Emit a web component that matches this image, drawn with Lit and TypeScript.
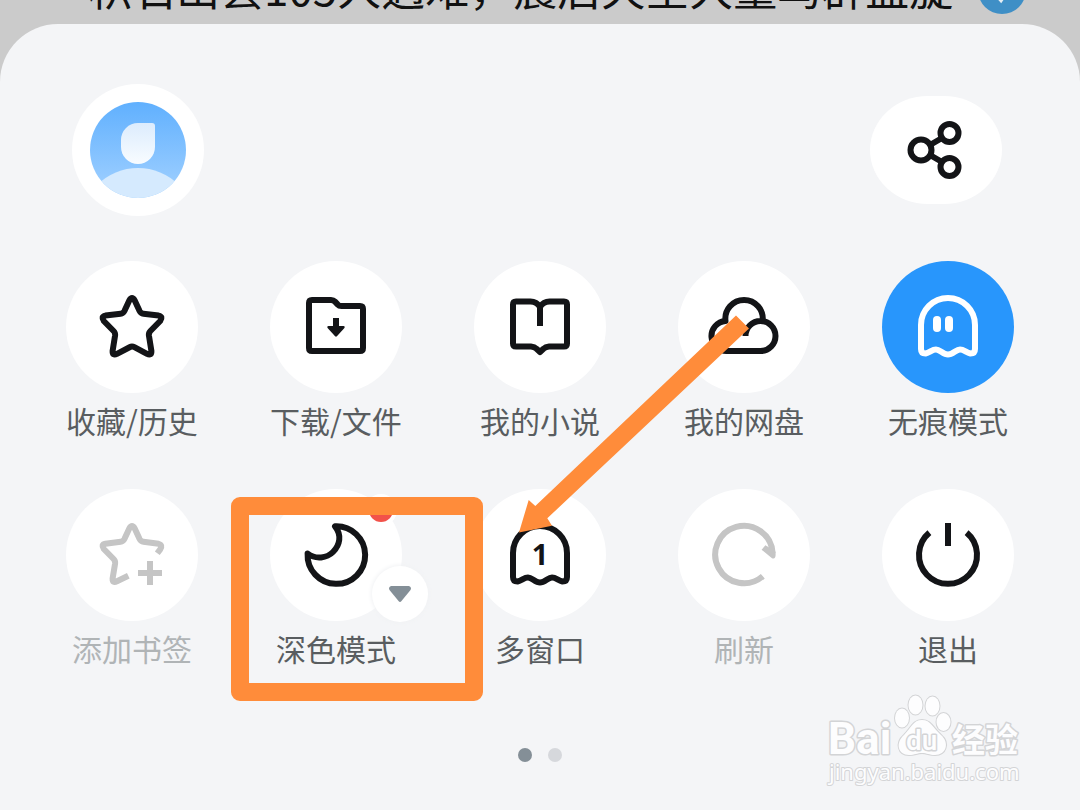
import { LitElement, html, css, svg, nothing } from "lit";
import { customElement, property } from "lit/decorators.js";

const STAR =
  "M63.4 39.2 Q66 34.8 68.6 39.2 L73.6 50 Q74.8 52.4 77.4 52.7 L92.6 54.6 Q97.4 55.6 94.2 60 L84.4 70 Q82.6 71.8 82.9 74.4 L85.4 90 Q85.6 95 81 92.8 L68.4 86.2 Q66 85 63.6 86.2 L51 92.8 Q46.4 95 46.6 90 L49.1 74.4 Q49.4 71.8 47.6 70 L37.8 60 Q34.6 55.6 39.4 54.6 L54.6 52.7 Q57.2 52.4 58.4 50 Z";
const GHOST =
  "M39 64 A27 27 0 0 1 93 64 V88 Q93 92.500 88.500 92.500 C84 91.500 82 88.500 78 88.500 C74 88.500 71 93.500 66 93.500 C61 93.500 58 88.500 54 88.500 C50 88.500 48 91.500 43.500 92.500 Q39 92.500 39 88 Z";

const icons: Record<string, unknown> = {
  star: svg`<path d=${STAR} />`,
  folder: svg`
    <path d="M42 39 H61 Q63.500 39 65 40.600 L67.600 43.400 Q69 45 71.500 45 H90 Q93 45 93 48 V87 Q93 90 90 90 H42 Q39 90 39 87 V42 Q39 39 42 39 Z" />
    <path class="solid" d="M63 57 H69 V65 H73.500 Q75.500 65.400 74.200 67.200 L66.900 75.300 Q66 76.200 65.100 75.300 L57.800 67.200 Q56.500 65.400 58.500 65 H63 Z" />`,
  book: svg`
    <path d="M66 65 V46 C63.500 42 60.500 40.500 56.500 40.500 H42 Q39 40.500 39 43.500 V82.500 Q39 85.500 42 85.500 H57 Q60.500 85.700 62.500 87.800 L66 91 L69.500 87.800 Q71.500 85.700 75 85.500 H90 Q93 85.500 93 82.500 V43.500 Q93 40.500 90 40.500 H75.500 C71.500 40.500 68.500 42 66 46" />`,
  cloud: svg`
    <path d="M67.500 75 A15 15 0 1 1 82.500 90 H49.500 A15 15 0 0 1 47.500 60 A18.700 18.700 0 1 1 84.600 60" />`,
  ghost: svg`
    <path d=${GHOST} />
    <rect class="solid" x="51" y="55" width="8" height="16" rx="4" />
    <rect class="solid" x="63" y="55" width="8" height="16" rx="4" />`,
  starAdd: svg`
    <path d="M91.300 64.300 L94.200 60.400 Q97 56 92.600 54.800 L77.400 52.700 Q74.800 52.400 73.600 50 L68.600 39.200 Q66 34.800 63.400 39.200 L58.400 50 Q57.200 52.400 54.600 52.700 L39.400 54.800 Q34.600 55.600 37.800 60 L47.600 70 Q49.400 71.800 49.100 74.400 L46.600 89.500 Q46.400 94.500 51 92.300 L62.300 86.800" />
    <path d="M84 72 V96 M72 84 H96" />`,
  moon: svg`
    <path d="M65 37.300 A28.800 28.800 0 1 1 37.600 64.500 C46 71 57 69 63 63 C70 56 72 46 65 37.300 Z" />`,
  windows: svg`
    <path d=${GHOST} />
    <text class="count" x="66" y="76" text-anchor="middle">1</text>`,
  refresh: svg`
    <path d="M84.800 87.200 A28.700 28.700 0 1 1 94.600 64" />
    <path class="solid" d="M91 54 L97.600 63 V66 Q97.500 70.500 94 69.200 L83.600 60.800 L87.400 56.200 L92 59 Z" />`,
  power: svg`
    <path d="M47.400 43.600 A29 29 0 1 0 84.600 43.600" />
    <path d="M66 34 V57" />`,
};

@customElement("menu-item")
class MenuItem extends LitElement {
  @property() icon = "";
  @property() label = "";
  @property({ type: Boolean, reflect: true }) active = false;
  @property({ type: Boolean, reflect: true }) disabled = false;

  static styles = css`
    :host {
      position: relative;
      display: flex;
      justify-content: center;
    }
    .item {
      display: flex;
      flex-direction: column;
      align-items: center;
      padding: 0;
      border: 0;
      background: none;
      font: inherit;
      color: #595d60;
    }
    .disc {
      width: 132px;
      height: 132px;
      border-radius: 50%;
      background: #fff;
      color: #131417;
    }
    .disc svg {
      display: block;
      fill: none;
      stroke: currentColor;
      stroke-width: 6;
      stroke-linejoin: round;
    }
    .disc .solid {
      fill: currentColor;
      stroke: none;
    }
    .disc .count {
      fill: currentColor;
      stroke: none;
      font: 700 29px "Noto Sans", sans-serif;
    }
    .label {
      font-size: 30px;
      font-weight: 400;
      line-height: 54px;
      white-space: nowrap;
    }
    :host([active]) .disc {
      background: #2896fc;
      color: #fff;
    }
    :host([disabled]) .disc {
      color: #c5c5c5;
    }
    :host([disabled]) .item {
      color: #b0b4b6;
    }
  `;

  render() {
    return html`
      <button class="item" ?disabled=${this.disabled}>
        <span class="disc">
          <svg width="132" height="132" viewBox="0 0 132 132" aria-hidden="true">${icons[this.icon] ?? nothing}</svg>
        </span>
        <span class="label">${this.label}</span>
      </button>
      <slot></slot>
    `;
  }
}

interface Entry {
  icon: string;
  label: string;
  active?: boolean;
  disabled?: boolean;
}

const entries: Entry[] = [
  { icon: "star", label: "收藏/历史" },
  { icon: "folder", label: "下载/文件" },
  { icon: "book", label: "我的小说" },
  { icon: "cloud", label: "我的网盘" },
  { icon: "ghost", label: "无痕模式", active: true },
  { icon: "starAdd", label: "添加书签", disabled: true },
  { icon: "moon", label: "深色模式" },
  { icon: "windows", label: "多窗口" },
  { icon: "refresh", label: "刷新", disabled: true },
  { icon: "power", label: "退出" },
];

@customElement("app-root")
class AppRoot extends LitElement {
  static styles = css`
    :host {
      display: flex;
      flex-direction: column;
      min-height: 100vh;
      overflow: hidden;
      background: #cbcbcb;
      font-family: "Noto Sans CJK SC", sans-serif;
    }
    .page {
      display: flex;
      align-items: flex-end;
      justify-content: space-between;
      box-sizing: border-box;
      height: 24px;
      padding: 0 54px 10px 88px;
    }
    .headline {
      margin: 0 0 5px;
      font-size: 44px;
      font-weight: 400;
      line-height: 44px;
      white-space: nowrap;
      color: #111;
    }
    .verified {
      flex: none;
      display: block;
    }
    .sheet {
      position: relative;
      flex: 1;
      display: flex;
      flex-direction: column;
      padding-top: 60px;
      border-radius: 58px 58px 0 0;
      background: #f4f5f7;
    }
    .top {
      display: flex;
      align-items: center;
      justify-content: space-between;
      padding: 0 78px 0 72px;
    }
    .round {
      display: flex;
      align-items: center;
      justify-content: center;
      width: 132px;
      height: 132px;
      padding: 0;
      border: 0;
      border-radius: 50%;
      background: #fff;
    }
    .share {
      height: 108px;
      border-radius: 58px / 54px;
    }
    .grid {
      display: grid;
      grid-template-columns: repeat(5, 1fr);
      row-gap: 42px;
      padding: 45px 30px 0;
    }
    .marked {
      z-index: 1;
    }
    .badge {
      position: absolute;
      top: 9px;
      left: calc(50% + 33px);
      width: 24px;
      height: 24px;
      border-radius: 50%;
      background: #f2524a;
      box-shadow: 0 0 0 4px #fff;
    }
    .more {
      position: absolute;
      top: 77px;
      left: calc(50% + 36px);
      display: flex;
      align-items: center;
      justify-content: center;
      width: 56px;
      height: 56px;
      padding: 0;
      border: 0;
      border-radius: 50%;
      background: #fff;
      box-shadow: 0 0 4px 1px #f1f2f4;
    }
    .frame {
      position: absolute;
      top: 8px;
      left: calc(50% - 105px);
      box-sizing: border-box;
      width: 252px;
      height: 204px;
      border: 18px solid #ff8c3a;
      border-radius: 9px;
      pointer-events: none;
    }
    .arrow {
      position: absolute;
      top: -179px;
      left: calc(50% + 174px);
      fill: #ff8c3a;
      pointer-events: none;
    }
    .dots {
      display: flex;
      justify-content: center;
      gap: 16px;
      margin-top: 73px;
    }
    .dot {
      width: 14px;
      height: 14px;
      border-radius: 50%;
      background: #d6d8dc;
    }
    .current {
      background: #848f97;
    }
    .watermark {
      position: absolute;
      right: 50px;
      bottom: 14px;
      fill: #fdfdfe;
      stroke: #d3d4d6;
      stroke-width: 3;
      stroke-linejoin: round;
      paint-order: stroke;
    }
    .latin {
      font: 700 44px Roboto, sans-serif;
    }
    .hanzi {
      font: 700 33px "Noto Sans CJK SC", sans-serif;
    }
    .du {
      font: 500 28px Roboto, sans-serif;
    }
    .site {
      font: 400 22px "Noto Sans", sans-serif;
      stroke-width: 2;
    }
  `;

  private extras() {
    return html`
      <span class="badge"></span>
      <button class="more" aria-label="深色模式选项">
        <svg width="22" height="17" viewBox="0 0 22 17" aria-hidden="true">
          <path d="M2 0 H20 Q23 1 21.500 4 L12.500 15 Q11 16.800 9.500 15 L0.500 4 Q-1 1 2 0 Z" fill="#848f97" />
        </svg>
      </button>
      <span class="frame"></span>
      <svg class="arrow" width="240" height="228" viewBox="510 310 240 228" aria-hidden="true">
        <path d="M736 315.500 L749 328.500 L547.300 518.300 L552 525.700 L519 532.500 L528.700 500 L535.300 506 Z" />
      </svg>
    `;
  }

  render() {
    return html`
      <header class="page">
        <h1 class="headline">积石山县105人遇难，震后天空大量鸟群盘旋</h1>
        <svg class="verified" width="48" height="48" viewBox="0 0 48 48" aria-hidden="true">
          <circle cx="24" cy="24" r="24" fill="#3f8fc6" />
          <path d="M14 24 L23 34 L36 16" fill="none" stroke="#e6eef4" stroke-width="4" />
        </svg>
      </header>
      <main class="sheet">
        <div class="top">
          <button class="round" aria-label="账号">
            <svg width="96" height="96" viewBox="0 0 96 96" aria-hidden="true">
              <defs>
                <linearGradient id="sky" x1="0.5" y1="0" x2="0.5" y2="1">
                  <stop offset="0" stop-color="#60b0fe" />
                  <stop offset="0.8" stop-color="#96cbff" />
                </linearGradient>
                <linearGradient id="face" x1="0" y1="0" x2="0" y2="1">
                  <stop offset="0" stop-color="#dcecfd" />
                  <stop offset="1" stop-color="#f8fcff" />
                </linearGradient>
                <clipPath id="ring"><circle cx="48" cy="48" r="48" /></clipPath>
              </defs>
              <g clip-path="url(#ring)">
                <rect width="96" height="96" fill="url(#sky)" />
                <circle cx="48" cy="124" r="58" fill="#d5eafe" />
                <path d="M48 21 H62 Q65 21 65 24 V45 A17 17 0 0 1 31 45 V38 A17 17 0 0 1 48 21 Z" fill="url(#face)" />
              </g>
            </svg>
          </button>
          <button class="round share" aria-label="分享">
            <svg width="60" height="60" viewBox="0 0 60 60" fill="none" stroke="#131417" stroke-width="6" aria-hidden="true">
              <circle cx="15" cy="30" r="10.500" />
              <circle cx="43.500" cy="13" r="9" />
              <circle cx="43.500" cy="47" r="9" />
              <path d="M24 25 L36 18 M24 35 L36 42" />
            </svg>
          </button>
        </div>
        <nav class="grid" aria-label="菜单">
          ${entries.map(
            (e) => html`<menu-item
              class=${e.icon === "moon" ? "marked" : "plain"}
              icon=${e.icon}
              label=${e.label}
              ?active=${e.active}
              ?disabled=${e.disabled}
              >${e.icon === "moon" ? this.extras() : nothing}</menu-item
            >`
          )}
        </nav>
        <div class="dots">
          <span class="dot current"></span>
          <span class="dot"></span>
        </div>
        <svg class="watermark" width="204" height="104" viewBox="826 692 204 104" aria-hidden="true">
          <text class="latin" x="828" y="754">Bai</text>
          <ellipse cx="902" cy="718" rx="7" ry="9.500" stroke-width="2" />
          <ellipse cx="915.500" cy="705" rx="7" ry="9.500" stroke-width="2" />
          <ellipse cx="932.500" cy="706" rx="7" ry="9.500" stroke-width="2" />
          <ellipse cx="943.500" cy="722" rx="7" ry="9" stroke-width="2" />
          <path d="M922 720 C931 720 933 728 941 735 C950 743 946 755 935 755 C929 755 927 753 922 753 C917 753 915 755 909 755 C898 755 895 743 904 735 C911 728 913 720 922 720 Z" stroke-width="2" />
          <text class="du" x="906" y="750">du</text>
          <text class="hanzi" x="952" y="752">经验</text>
          <text class="site" x="829" y="780">jingyan.baidu.com</text>
        </svg>
      </main>
    `;
  }
}
